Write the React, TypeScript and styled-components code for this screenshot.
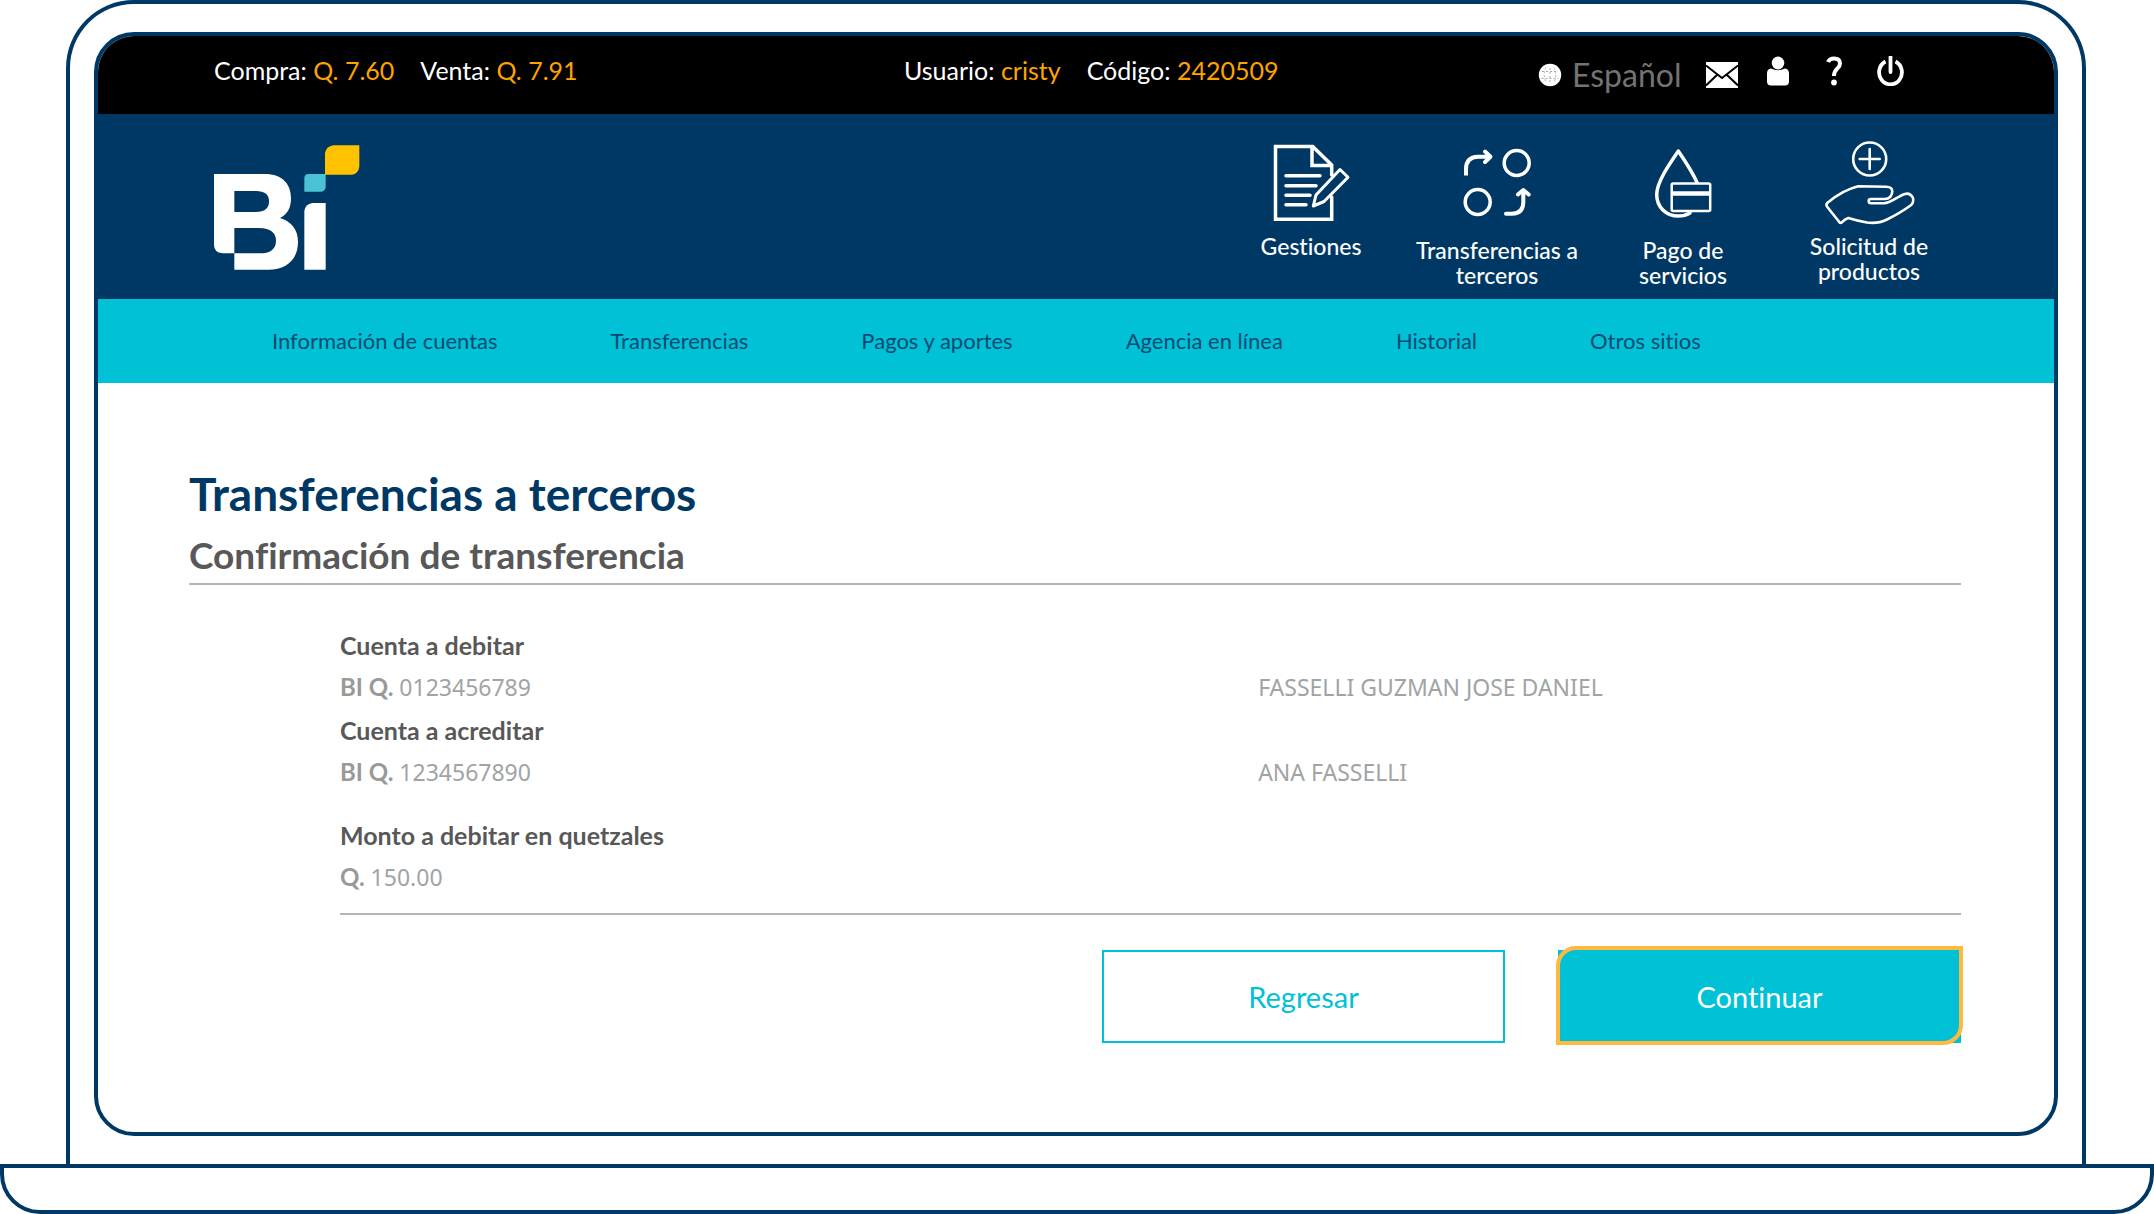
import React from "react";
import styled, { createGlobalStyle } from "styled-components";

const navy = "#003865";
const cyan = "#00c1d5";
const amber = "#ffa300";
const focus = "#ffb840";

const GlobalStyle = createGlobalStyle`
  *, *::before, *::after { box-sizing: border-box; }
  body {
    margin: 0;
    background: #fff;
    font-family: Lato, "Open Sans", sans-serif;
    font-variant-ligatures: none;
  }
  h1, h2, dl, dd { margin: 0; padding: 0; }
  button { font-family: inherit; font-variant-ligatures: none; cursor: pointer; }
`;

const Laptop = styled.div`
  display: flex;
  flex-direction: column;
`;

const Lid = styled.div`
  margin: 0 68px 0 66px;
  padding: 28px 24px;
  border: 4px solid ${navy};
  border-bottom: 0;
  border-radius: 68px 68px 0 0;
`;

const Base = styled.div`
  height: 50px;
  border: 4px solid ${navy};
  border-radius: 0 0 40px 40px;
`;

const Screen = styled.div`
  border: 4px solid ${navy};
  border-radius: 40px;
  overflow: hidden;
  background: #fff;
`;

const TopBar = styled.div`
  display: grid;
  grid-template-columns: 690fr 634fr 380px;
  align-items: center;
  height: 78px;
  padding: 0 136px 0 116px;
  background: #000;
  color: #fff;
  font-size: 25px;
  line-height: 32px;
`;

const Facts = styled.div`
  display: flex;
  gap: 26px;
  padding-bottom: 10px;
  white-space: nowrap;
`;

const Amber = styled.span`
  color: ${amber};
`;

const Tools = styled.div`
  display: flex;
  align-items: center;
`;

const LanguageButton = styled.button`
  display: flex;
  flex: 1;
  align-items: center;
  gap: 10px;
  padding: 0;
  border: 0;
  background: none;
  color: #737373;
  font-size: 32px;
  line-height: 36px;
`;

const IconButton = styled.button<{ $raised?: boolean }>`
  display: flex;
  justify-content: center;
  width: 56px;
  padding: 0 0 ${(p) => (p.$raised ? "8px" : "0")};
  border: 0;
  background: none;
`;

const Header = styled.header`
  display: flex;
  justify-content: space-between;
  height: 185px;
  padding: 24px 92px 0 116px;
  background: ${navy};
`;

const LogoLink = styled.a`
  margin-top: 7px;
`;

const Actions = styled.nav`
  display: grid;
  grid-template-columns: repeat(4, 186px);
`;

const Action = styled.a`
  display: flex;
  flex-direction: column;
  align-items: center;
  color: #fff;
  font-size: 23px;
  line-height: 25px;
  font-weight: 500;
  text-align: center;
  text-decoration: none;
`;

const ActionLabel = styled.span`
  width: min-content;
  min-width: 120px;
`;

const Menu = styled.nav`
  display: flex;
  align-items: center;
  gap: 113px;
  height: 84px;
  padding-left: 174px;
  background: ${cyan};
`;

const MenuLink = styled.a`
  color: #004a73;
  font-size: 22px;
  line-height: 28px;
  text-decoration: none;
  white-space: nowrap;
`;

const Main = styled.main`
  padding: 82px 93px 89px 91px;
`;

const Title = styled.h1`
  color: ${navy};
  font-size: 46px;
  line-height: 58px;
  font-weight: 700;
`;

const Subtitle = styled.h2`
  margin-top: 10px;
  padding-bottom: 6px;
  border-bottom: 2px solid #b4b4b4;
  color: #585858;
  font-size: 37px;
  line-height: 44px;
  font-weight: 700;
`;

const Details = styled.dl`
  margin: 39px 0 0 151px;
  padding-bottom: 14px;
  border-bottom: 2px solid #b4b4b4;
`;

const Detail = styled.div<{ $apart?: boolean }>`
  display: grid;
  grid-template-columns: 917fr 702fr;
  margin-top: ${(p) => (p.$apart ? "20px" : "0")};
`;

const Term = styled.dt`
  grid-column: 1 / -1;
  color: #585858;
  font-size: 25px;
  line-height: 42px;
  font-weight: 700;
`;

const Value = styled.dd`
  color: #a0a4a4;
  font-family: "Noto Sans", sans-serif;
  font-size: 23px;
  line-height: 43px;
`;

const Currency = styled.span`
  color: #999;
  font-family: Lato, sans-serif;
  font-size: 24px;
  line-height: 24px;
  font-weight: 700;
`;

const Buttons = styled.div`
  display: flex;
  justify-content: flex-end;
  gap: 53px;
  margin-top: 35px;
`;

const ActionButton = styled.button<{ $primary?: boolean }>`
  position: relative;
  width: 403px;
  height: 93px;
  border: 2px solid ${cyan};
  background: ${(p) => (p.$primary ? cyan : "#fff")};
  color: ${(p) => (p.$primary ? "#fff" : cyan)};
  font-size: 29px;
  line-height: 34px;

  &::after {
    content: "";
    display: ${(p) => (p.$primary ? "block" : "none")};
    position: absolute;
    inset: -6px -4px -4px;
    border: 4px solid ${focus};
    border-radius: 20px 0 20px 0;
  }
`;

const Logo = () => (
  <svg width="146" height="125" viewBox="72 45 438 375" role="img" aria-label="Bi">
    <path
      fill="#fff"
      fillRule="evenodd"
      d="M72 132H224C278 132 303 163 303 205C303 235 292 254 270 264C305 275 324 300 324 335C324 390 288 419 235 419H133V370H97Q72 367 72 345ZM133 183H198Q237 183 237 214Q237 246 198 246H133ZM133 294H208Q258 296 258 332Q258 370 208 370H133Z"
    />
    <path fill="#fff" d="M343 419V243Q346 222 367 219H407V419Z" />
    <path fill="#4bc1d5" d="M343 185V143Q344 133 355 132H407V172Q405 184 394 185Z" />
    <path fill="#ffc200" d="M405 134V70Q408 49 430 46H508V110Q505 131 486 134Z" />
  </svg>
);

const line = {
  fill: "none",
  stroke: "#fff",
  strokeLinecap: "round" as const,
  strokeLinejoin: "round" as const,
};

const DocumentIcon = () => (
  <svg width="96" height="96" viewBox="0 0 96 96" strokeWidth="3.5" {...line} aria-hidden="true">
    <path strokeLinejoin="miter" d="M68.7 37V27L49.7 8.5H12.500V81.3H68.7V59M49 8.5V27.5H68.7" />
    <path d="M23 37.7H57M23 47.7H53M23 57.3H47M23 66.7H43" />
    <path strokeWidth="3" d="M50.3 68L53 57L77 31.5L85 39.3L61 63.5Z" />
  </svg>
);

const TransferIcon = () => (
  <svg width="96" height="100" viewBox="0 0 96 100" strokeWidth="4" {...line} aria-hidden="true">
    <circle cx="67.7" cy="25" r="12.5" strokeWidth="3.5" />
    <circle cx="28.7" cy="64" r="12.5" strokeWidth="3.5" />
    <path strokeLinecap="butt" d="M17 37.5V31Q17 19 29 18.7H40" />
    <path d="M36 13.5L41.5 18.7L36 24" />
    <path d="M57 75.7H63Q74.3 75.7 74.3 64V53" />
    <path d="M69 56.5L74.3 52L79.7 56.5" />
  </svg>
);

const ServicesIcon = () => (
  <svg width="96" height="100" viewBox="0 0 96 100" strokeWidth="3.5" {...line} aria-hidden="true">
    <path d="M62 44.5C57 33 50 23 43.3 13C35 25 21.7 44 21.7 56.5C21.7 69 31 78 43.3 78Q50 78 55 75" />
    <rect x="36.7" y="45.5" width="38.5" height="27.5" rx="1.5" strokeWidth="2.5" />
    <path strokeWidth="4.5" strokeLinecap="butt" d="M36.7 55.5H75" />
  </svg>
);

const ProductsIcon = () => (
  <svg width="96" height="96" viewBox="0 0 96 96" strokeWidth="2.6" {...line} aria-hidden="true">
    <circle cx="48.7" cy="21" r="16.5" />
    <path d="M38.7 21H58.7M48.7 11V31" />
    <path d="M37.3 48.3L65 48.7Q71.5 48.7 71.3 53.7Q70.5 61 64 61H50Q47.7 61 47.7 63Q47.7 65.3 50 65.3H63C70 65 77 58 84 56Q89 54.5 92 60Q93 65 89.5 67.5C82 73 75 77 66 81.5Q57 86 46 84.5Q35 82.5 27.3 80Q24 81 20.5 84.7Q19 85.5 17.5 83L6.3 69Q4.5 67 6.5 64.7Q22 52 37.3 48.3Z" />
  </svg>
);

const GlobeIcon = () => (
  <svg width="24" height="24" viewBox="0 0 24 24" aria-hidden="true">
    <circle cx="12" cy="12" r="11.2" fill="#fff" />
    <path
      d="M4 8.5H20M3.5 15.5H20.5M12 5V19M8 4.5Q4.5 12 8 19.5M16 4.5Q19.5 12 16 19.5"
      fill="none"
      stroke="#aaa"
      strokeDasharray="2 2"
    />
  </svg>
);

const MailIcon = () => (
  <svg width="32" height="26" viewBox="0 0 32 26" aria-hidden="true">
    <rect width="32" height="26" fill="#fff" />
    <path d="M0 3.5L16 16L32 3.5M0 23.5L11.5 12.5M32 23.5L20.5 12.5" fill="none" stroke="#000" strokeWidth="2" />
  </svg>
);

const UserIcon = () => (
  <svg width="22" height="30" viewBox="0 0 22 30" fill="#fff" aria-hidden="true">
    <ellipse cx="11" cy="7" rx="6.3" ry="6.5" />
    <path d="M4 12.5Q11 16 18 12.5Q22 13 22 17.5V25.5Q22 29.5 18 29.5H4Q0 29.5 0 25.5V17.5Q0 13 4 12.5Z" />
  </svg>
);

const HelpIcon = () => (
  <svg width="16" height="30" viewBox="0 0 16 30" aria-hidden="true">
    <path d="M2 6Q3.5 2.5 8 2.5Q14 2.5 14 7.5C14 13 8 12 8 20" fill="none" stroke="#fff" strokeWidth="4" />
    <circle cx="8" cy="26.5" r="2.9" fill="#fff" />
  </svg>
);

const PowerIcon = () => (
  <svg width="27" height="30" viewBox="0 0 27 30" fill="none" stroke="#fff" strokeWidth="3.8" aria-hidden="true">
    <path d="M8.5 5.5A11.4 12 0 1 0 18.5 5.5" />
    <path d="M13.5 1V16" strokeLinecap="round" />
  </svg>
);

const actions = [
  { lines: "Gestiones", Icon: DocumentIcon },
  { lines: "Transferencias\u00a0a terceros", Icon: TransferIcon },
  { lines: "Pago\u00a0de servicios", Icon: ServicesIcon },
  { lines: "Solicitud\u00a0de productos", Icon: ProductsIcon },
];

const menu = [
  "Información de cuentas",
  "Transferencias",
  "Pagos y aportes",
  "Agencia en línea",
  "Historial",
  "Otros sitios",
];

const details = [
  { term: "Cuenta a debitar", currency: "BI Q.", value: "0123456789", owner: "FASSELLI GUZMAN JOSE DANIEL" },
  { term: "Cuenta a acreditar", currency: "BI Q.", value: "1234567890", owner: "ANA FASSELLI" },
  { term: "Monto a debitar en quetzales", currency: "Q.", value: "150.00", apart: true },
];

export default function App() {
  return (
    <>
      <GlobalStyle />
      <Laptop>
        <Lid>
          <Screen>
            <TopBar>
              <Facts>
                <span>Compra: <Amber>Q. 7.60</Amber></span>
                <span>Venta: <Amber>Q. 7.91</Amber></span>
              </Facts>
              <Facts>
                <span>Usuario: <Amber>cristy</Amber></span>
                <span>Código: <Amber>2420509</Amber></span>
              </Facts>
              <Tools>
                <LanguageButton type="button"><GlobeIcon />Español</LanguageButton>
                <IconButton type="button" aria-label="Mensajes"><MailIcon /></IconButton>
                <IconButton type="button" aria-label="Perfil" $raised><UserIcon /></IconButton>
                <IconButton type="button" aria-label="Ayuda" $raised><HelpIcon /></IconButton>
                <IconButton type="button" aria-label="Salir" $raised><PowerIcon /></IconButton>
              </Tools>
            </TopBar>
            <Header>
              <LogoLink href="#"><Logo /></LogoLink>
              <Actions aria-label="Accesos">
                {actions.map(({ lines, Icon }) => (
                  <Action href="#" key={lines}>
                    <Icon />
                    <ActionLabel>{lines}</ActionLabel>
                  </Action>
                ))}
              </Actions>
            </Header>
            <Menu aria-label="Principal">
              {menu.map((item) => (
                <MenuLink href="#" key={item}>{item}</MenuLink>
              ))}
            </Menu>
            <Main>
              <Title>Transferencias a terceros</Title>
              <Subtitle>Confirmación de transferencia</Subtitle>
              <Details>
                {details.map((d) => (
                  <Detail key={d.term} $apart={d.apart}>
                    <Term>{d.term}</Term>
                    <Value><Currency>{d.currency}</Currency> {d.value}</Value>
                    {d.owner && <Value>{d.owner}</Value>}
                  </Detail>
                ))}
              </Details>
              <Buttons>
                <ActionButton type="button">Regresar</ActionButton>
                <ActionButton type="button" $primary>Continuar</ActionButton>
              </Buttons>
            </Main>
          </Screen>
        </Lid>
        <Base />
      </Laptop>
    </>
  );
}
